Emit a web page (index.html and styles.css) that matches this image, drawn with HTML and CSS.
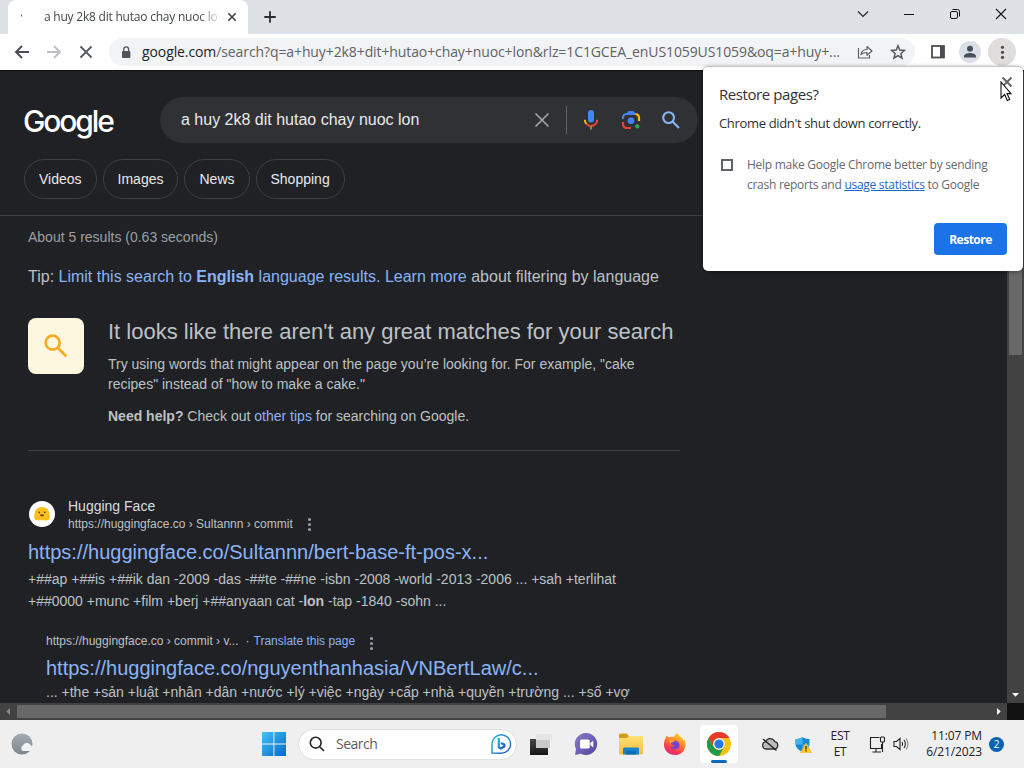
FILE: index.html
```
<!DOCTYPE html>
<html lang="en">
<head>
<meta charset="utf-8">
<title>a huy 2k8 dit hutao chay nuoc lon</title>
<link rel="stylesheet" href="styles.css">
</head>
<body>
<div class="screen">
  <header class="tabstrip">
    <div class="tab">
      <svg class="spinner" width="16" height="16" viewBox="0 0 16 16"><path d="M5.5 5.5v2" stroke="#4a6a85" stroke-width="1.2"/></svg>
      <span class="tab-title">a huy 2k8 dit hutao chay nuoc lo</span>
      <svg class="tab-close" width="10" height="10" viewBox="0 0 10 10"><path d="M1.300 1.300l7.400 7.400M8.700 1.300L1.300 8.700" stroke="#3c4043" stroke-width="1.500"/></svg>
    </div>
    <svg class="newtab" width="14" height="14" viewBox="0 0 14 14"><path d="M7 1.300v11.400M1.300 7h11.400" stroke="#2b2d30" stroke-width="1.800"/></svg>
    <div class="window-buttons">
      <svg width="46" height="28" viewBox="0 0 46 28"><path d="M18 11.500l5 5 5-5" fill="none" stroke="#222" stroke-width="1.100"/></svg>
      <svg width="46" height="28" viewBox="0 0 46 28"><path d="M18 14.500h10" stroke="#111" stroke-width="1"/></svg>
      <svg width="46" height="28" viewBox="0 0 46 28"><g fill="none" stroke="#111"><rect x="18.500" y="11.500" width="7" height="7" rx="1.500"/><path d="M20.500 9.500h5a2 2 0 0 1 2 2v5"/></g></svg>
      <svg width="46" height="28" viewBox="0 0 46 28"><path d="M18 9l10 10M28 9L18 19" stroke="#111" stroke-width="1.100"/></svg>
    </div>
  </header>
  <nav class="toolbar">
    <svg width="16" height="16" viewBox="0 0 16 16"><path d="M15 8H2M8 2L2 8l6 6" fill="none" stroke="#4a4d51" stroke-width="1.900"/></svg>
    <svg width="16" height="16" viewBox="0 0 16 16"><path d="M1 8h13M8 2l6 6-6 6" fill="none" stroke="#bdbfc2" stroke-width="1.900"/></svg>
    <svg width="16" height="16" viewBox="0 0 16 16"><path d="M2.500 2.500l11 11M13.500 2.500l-11 11" stroke="#55585c" stroke-width="1.800"/></svg>
    <div class="omnibox">
      <svg width="10" height="13" viewBox="0 0 10 13"><rect x="1" y="5" width="8.400" height="7" rx="1" fill="#505357"/><path d="M2.800 5V3.300a2.400 2.400 0 0 1 4.800 0V5" fill="none" stroke="#505357" stroke-width="1.300"/></svg>
      <span class="url"><b>google.com</b>/search?q=a+huy+2k8+dit+hutao+chay+nuoc+lon&amp;rlz=1C1GCEA_enUS1059US1059&amp;oq=a+huy+...</span>
      <svg class="share" width="17" height="16" viewBox="0 0 17 16"><g fill="none" stroke="#606367" stroke-width="1.200"><path d="M1.500 4v10h11v-3"/><path d="M4 10.500c.5-3.500 2.500-5 6-5V2.500L15 7l-5 4.300V8.500c-3 0-4.500.5-6 2z" stroke-linejoin="round"/></g></svg>
      <svg class="star" width="16" height="16" viewBox="0 0 16 16"><path d="M8 1.700l1.800 4.300 4.700.4-3.600 3.100 1.100 4.600L8 11.600l-4 2.500 1.100-4.600L1.500 6.400l4.700-.4z" fill="none" stroke="#55585c" stroke-width="1.500"/></svg>
    </div>
    <svg class="side" width="14" height="14" viewBox="0 0 14 14"><rect x="1" y="1" width="12" height="11.500" fill="none" stroke="#4a4d51" stroke-width="1.800"/><path d="M9 1h4v11.500H9z" fill="#4a4d51"/></svg>
    <svg class="avatar" width="22" height="22" viewBox="0 0 22 22"><circle cx="11" cy="11" r="11" fill="#dadfe7"/><circle cx="11" cy="7.800" r="3" fill="#46505f"/><path d="M5 16.500v-1.200c0-2.200 3.500-3.300 6-3.300s6 1.100 6 3.300v1.200z" fill="#46505f"/></svg>
    <svg class="menu" width="28" height="28" viewBox="0 0 28 28"><circle cx="14" cy="14" r="14" fill="#dfdedd"/><g fill="#4a4d51"><circle cx="14.500" cy="9.300" r="1.600"/><circle cx="14.500" cy="14.300" r="1.600"/><circle cx="14.500" cy="19.300" r="1.600"/></g></svg>
  </nav>

  <div class="viewport">
    <main class="page">
      <div class="search-row">
        <div class="logo">Google</div>
        <div class="search-box">
          <span class="query">a huy 2k8 dit hutao chay nuoc lon</span>
          <svg width="16" height="16" viewBox="0 0 16 16"><path d="M1.500 1.500l13 13M14.500 1.500l-13 13" stroke="#a2a5a9" stroke-width="1.700"/></svg>
          <i class="divider"></i>
          <svg class="mic" width="16" height="22" viewBox="0 0 16 22"><rect x="5" y="1" width="6" height="12.500" rx="3" fill="#4285f4"/><g fill="none" stroke-width="2"><path d="M1.800 10.800a6.200 6.200 0 0 0 1.700 4.300" stroke="#fbbc04"/><path d="M3.500 15a6.200 6.200 0 0 0 10.700-4.200" stroke="#ea4335"/><path d="M8 17v3.500" stroke="#8d8b46"/></g></svg>
          <svg class="lens" width="20" height="20" viewBox="0 0 20 20"><circle cx="10" cy="10.800" r="3.300" fill="#4285f4"/><circle cx="16.300" cy="16.300" r="2.100" fill="#34a853"/><g fill="none" stroke-width="2.200"><path d="M10 18H5.500A3.500 3.500 0 0 1 2 14.500V12" stroke="#ea4335"/><path d="M2 9V7.500A3.500 3.500 0 0 1 5.500 4h9" stroke="#4285f4"/><path d="M7 3.500L8 2.200h4l1 1.300" stroke="#4285f4"/><path d="M14.300 4A3.700 3.700 0 0 1 18 7.700V11" stroke="#fbbc04"/></g></svg>
          <svg class="find" width="20" height="20" viewBox="0 0 20 20"><g fill="none" stroke="#8ab4f8" stroke-width="2.100"><circle cx="7.600" cy="7.600" r="5.400"/><path d="M11.600 11.600l6.300 6.300"/></g></svg>
        </div>
      </div>
      <div class="chips"><span>Videos</span><span>Images</span><span>News</span><span>Shopping</span></div>
      <div class="results">
        <p class="stats">About 5 results (0.63 seconds)</p>
        <p class="tip">Tip: <a>Limit this search to <b>English</b> language results.</a> <a>Learn more</a> about filtering by language</p>
        <section class="notice">
          <div class="notice-icon"><svg width="24" height="24" viewBox="0 0 24 24"><g fill="none" stroke="#f9ab24" stroke-width="2.700"><circle cx="8.700" cy="8.700" r="7"/><path d="M13.500 13.500l8.700 8.700"/></g></svg></div>
          <div class="notice-body">
            <h2>It looks like there aren't any great matches for your search</h2>
            <p>Try using words that might appear on the page you’re looking for. For example, "cake<br>recipes" instead of "how to make a cake."</p>
            <p class="help"><b>Need help?</b> Check out <a>other tips</a> for searching on Google.</p>
          </div>
        </section>
        <article class="result">
          <div class="source">
            <svg width="28" height="28" viewBox="0 0 28 28"><circle cx="14" cy="14" r="13" fill="#fff"/><path d="M6.500 18.500C5.500 12 8 7 14 7s8.500 5 7.500 11.500c-.3 2-3 2-4.500 1.800-2-.2-4-.2-6 0-1.500.2-4.200.2-4.500-1.800z" fill="#fcc21b"/><path d="M6.500 17l4 3M21.500 17l-4 3" stroke="#f5ae22"/><circle cx="11.300" cy="12.300" r=".9" fill="#4b3b2b"/><circle cx="16.700" cy="12.300" r=".9" fill="#4b3b2b"/><path d="M12 14.500h4a2 2 0 0 1-4 0z" fill="#6d3427"/></svg>
            <div><div class="site">Hugging Face</div><div class="crumb">https://huggingface.co › Sultannn › commit <i class="dots"></i></div></div>
          </div>
          <h3>https://huggingface.co/Sultannn/bert-base-ft-pos-x...</h3>
          <p>+##ap +##is +##ik dan -2009 -das -##te -##ne -isbn -2008 -world -2013 -2006 ... +sah +terlihat<br>+##0000 +munc +film +berj +##anyaan cat -<b>lon</b> -tap -1840 -sohn ...</p>
        </article>
        <article class="result nested">
          <div class="crumb">https://huggingface.co › commit › v... <span class="mid">·</span> <a>Translate this page</a> <i class="dots"></i></div>
          <h3>https://huggingface.co/nguyenthanhasia/VNBertLaw/c...</h3>
          <p>... +the +sản +luật +nhân +dân +nước +lý +việc +ngày +cấp +nhà +quyền +trường ... +số +vợ</p>
        </article>
      </div>
    </main>
    <div class="vbar"><i class="vthumb"></i><svg width="17" height="17" viewBox="0 0 17 17"><path d="M5 7h7l-3.500 3.700z" fill="#fff"/></svg></div>
    <div class="hbar"><svg width="17" height="17" viewBox="0 0 17 17"><path d="M10 5v7L6.300 8.500z" fill="#8a8a8a"/></svg><i class="hthumb"></i><svg class="right" width="17" height="17" viewBox="0 0 17 17"><path d="M7 5v7l3.700-3.500z" fill="#fff"/></svg></div>
    <div class="corner"></div>
  </div>

  <footer class="taskbar">
    <svg class="weather" width="24" height="24" viewBox="0 0 24 24"><defs><linearGradient id="moon" x2="0" y2="1"><stop stop-color="#a3acb2"/><stop offset="1" stop-color="#7c868c"/></linearGradient></defs><circle cx="11" cy="12" r="10.500" fill="url(#moon)"/><path d="M12 19a3 3 0 0 1 0-5.500 4 4 0 0 1 7-1 3.500 3.500 0 0 1 0 6.500z" fill="#f2f5f7"/></svg>
    <svg class="start" width="24" height="24" viewBox="0 0 24 24"><defs><linearGradient id="win" x2="1" y2="1"><stop stop-color="#42c3f5"/><stop offset="1" stop-color="#0567c9"/></linearGradient></defs><path d="M0 0h11.400v11.400H0zM12.400 0H24v11.400H12.400zM0 12.400h11.400V24H0zM12.400 12.400H24V24H12.400z" fill="url(#win)"/></svg>
    <div class="task-search">
      <svg width="16" height="16" viewBox="0 0 16 16"><g fill="none" stroke="#222" stroke-width="1.600"><circle cx="6.700" cy="6.700" r="5.400"/><path d="M10.700 10.700l4.300 4.300"/></g></svg>
      <span>Search</span>
      <svg class="bing" width="22" height="22" viewBox="0 0 22 22"><defs><linearGradient id="bing" x2="1" y2="1"><stop stop-color="#27b5d8"/><stop offset="1" stop-color="#2755b9"/></linearGradient></defs><path d="M2 20V11a9.300 9.300 0 1 1 9.300 9.300z" fill="#f5fbff" stroke="url(#bing)" stroke-width="1.400"/><path d="M8.800 5v9.300l2 1.200 3.500-2v-2L10.900 10" fill="none" stroke="url(#bing)" stroke-width="2.200"/></svg>
    </div>
    <svg class="taskview" width="24" height="24" viewBox="0 0 24 24"><defs><linearGradient id="tv" x2="0" y2="1"><stop stop-color="#484848"/><stop offset="1" stop-color="#161616"/></linearGradient></defs><path d="M1 7h18v16H1z" fill="url(#tv)"/><path d="M7 3h14v13H7z" fill="#c9c9c9"/><path d="M7 2h16v6H7z" fill="#e5e5e5"/></svg>
    <svg class="chat" width="24" height="24" viewBox="0 0 24 24"><defs><linearGradient id="ch" x2="1" y2="1"><stop stop-color="#8a7ac7"/><stop offset="1" stop-color="#5148a0"/></linearGradient></defs><path d="M12.300 1A11 11 0 1 1 7 21.700L1 23l1-6A11 11 0 0 1 12.300 1z" fill="url(#ch)"/><rect x="6" y="7.500" width="9.700" height="9" rx="1.500" fill="#fff"/><path d="M16.300 11l3-2.500v7l-3-2.500z" fill="#fff"/></svg>
    <svg class="folder" width="26" height="24" viewBox="0 0 26 24"><defs><linearGradient id="fd" x2="0" y2="1"><stop stop-color="#ffe078"/><stop offset="1" stop-color="#f5bd3a"/></linearGradient></defs><path d="M1 3a1.500 1.500 0 0 1 1.500-1.500h6L11 4h13v5H1z" fill="#d39a1c"/><path d="M1 6h8l2-2h12.500A1.500 1.500 0 0 1 25 5.500V21a1.500 1.500 0 0 1-1.500 1.500h-21A1.500 1.500 0 0 1 1 21z" fill="url(#fd)"/><path d="M5 22.500V17a1.500 1.500 0 0 1 1.500-1.500h13A1.500 1.500 0 0 1 21 17v5.500z" fill="#1683cf"/><path d="M8 19h10v3.500H8z" fill="#106cb5"/></svg>
    <svg class="firefox" width="24" height="24" viewBox="0 0 24 24"><defs><linearGradient id="ff" x1=".8" y1="0" x2=".3" y2="1"><stop stop-color="#ffdd3c"/><stop offset=".4" stop-color="#ff8a26"/><stop offset=".75" stop-color="#f83c50"/><stop offset="1" stop-color="#dc2a87"/></linearGradient></defs><path d="M3.500 3.500c1 1 1.700 1.400 2.500 1.800C8 4.500 10 5 11.500 4.500 11.500 2.500 13 1.500 14.500 1c.5 3 5.500 4 6 8l1-1.500C24 13 22 23 12.300 23 4 23 .5 17 1 11.500 1.200 8 2.500 7 3.500 3.500z" fill="url(#ff)"/><path d="M8 9c2 .2 3-.7 4.500-.2 3 .7 5 3 3.800 6-1.800 4-8 3.300-8.800-.8 1.500 1.300 3.200 1 4.200-.4-1.700-.3-3-.7-3.800-2z" fill="#7745c9"/><path d="M6 6.500c1.700 1.300 3 1.200 5.700 2.300-1 1.700-2.500 1.200-4 2.600C6.300 10.500 5.700 9 6 6.500z" fill="#ff9f34"/></svg>
    <div class="task-active">
      <svg width="24" height="24" viewBox="0 0 24 24"><circle cx="12" cy="12" r="12" fill="#fbc116"/><path d="M1.600 6A12 12 0 0 1 22.400 6H12a6 6 0 0 0-5.200 9z" fill="#e33b2e"/><path d="M1.600 6A12 12 0 0 0 12 24l5.200-9A6 6 0 0 1 6.800 15z" fill="#229a4b"/><circle cx="12" cy="12" r="5.800" fill="#fff"/><circle cx="12" cy="12" r="4.600" fill="#2879e5"/></svg>
      <i></i>
    </div>
    <svg class="cloud" width="18" height="16" viewBox="0 0 18 16"><path d="M5 13a3.700 3.700 0 0 1-.5-7.300 5 5 0 0 1 9.300 0A3.700 3.700 0 0 1 13.500 13z" fill="#bdbdbd" stroke="#333" stroke-width="1.300"/><path d="M2 3l13.500 11.500" stroke="#222" stroke-width="1.400"/></svg>
    <svg class="shield" width="17" height="17" viewBox="0 0 17 17"><path d="M7.500 1c2 1.500 4 2 7 2v4.500c0 4-3 6.500-7 8.500-4-2-7-4.500-7-8.500V3c3 0 5-.5 7-2z" fill="#168ad8"/><path d="M7.500 1v7.500h-7V3c3 0 5-.5 7-2zM7.500 8.500h7c-.5 4-3.500 6-7 7.500z" fill="#43b5ed"/><path d="M11 7l5.500 9.500h-11z" fill="#ffc928" stroke="#f5a910" stroke-width=".5"/><path d="M11 10v3.500M11 14.300v1.200" stroke="#332500" stroke-width="1.300"/></svg>
    <div class="lang">EST<br>ET</div>
    <svg class="network" width="17" height="17" viewBox="0 0 17 17"><g fill="none" stroke="#222" stroke-width="1.100"><path d="M10.500 1.500h-9v11h11V8M7 12.500V16M3.500 16H12"/><rect x="11.500" y="1" width="4" height="5" rx="1"/><path d="M13.500 6v10"/></g></svg>
    <svg class="sound" width="17" height="16" viewBox="0 0 17 16"><g fill="none" stroke="#222" stroke-width="1.100"><path d="M1 5.500v5h2.500L7 13.500v-11L3.500 5.500z"/><path d="M9 6c.8 1.300.8 2.700 0 4M11 4c1.700 2.500 1.700 5.500 0 8"/><path d="M13 2.500c2.500 3.500 2.500 7.500 0 11" stroke="#888"/></g></svg>
    <div class="clock">11:07 PM<br>6/21/2023</div>
    <div class="badge">2</div>
  </footer>

  <aside class="restore">
    <svg class="restore-close" width="12" height="12" viewBox="0 0 12 12"><path d="M1.500 1.500l9 9M10.500 1.500l-9 9" stroke="#5f6368" stroke-width="1.900"/></svg>
    <h4>Restore pages?</h4>
    <p class="message">Chrome didn't shut down correctly.</p>
    <div class="consent"><i class="checkbox"></i><p>Help make Google Chrome better by sending<br>crash reports and <a>usage statistics</a> to Google</p></div>
    <button>Restore</button>
  </aside>
  <svg class="cursor" width="13" height="21" viewBox="0 0 13 21"><path d="M1 1v16l3.700-3.500 2.600 6 2.400-1-2.600-5.900H11z" fill="#fff" stroke="#111" stroke-width="1.100"/></svg>
</div>
</body>
</html>
```
FILE: styles.css
```
* { box-sizing: border-box; }
body { margin: 0; font-family: "Liberation Sans", Arial, sans-serif; }
h2, h3, h4, p { margin: 0; font-weight: 400; }
svg { display: block; flex: none; }
i { font-style: normal; }
.screen { position: relative; width: 1024px; height: 768px; overflow: hidden; display: flex; flex-direction: column; }
.tabstrip, .toolbar, .taskbar, .restore { font-family: "Open Sans", "Noto Sans", sans-serif; }

.tabstrip { height: 34px; background: #dee1e6; display: flex; flex: none; }
.tab { width: 240px; margin-left: 8px; background: #fff; border-radius: 8px 8px 0 0; display: flex; align-items: center; padding-left: 8px; }
.tab-title { width: 174px; margin-left: 12px; font-size: 12px; line-height: 17px; margin-top: -1px; letter-spacing: -.22px; color: #45484c; white-space: nowrap; mask-image: linear-gradient(90deg, #000 155px, transparent 178px); }
.tab-close { margin-left: 9px; }
.newtab { margin: 10px 0 0 15px; }
.window-buttons { margin-left: auto; display: flex; }

.toolbar { height: 37px; background: #fff; display: flex; flex: none; align-items: center; padding-left: 14px; border-bottom: 1px solid #111; }
.toolbar > svg + svg { margin-left: 16px; }
.omnibox { margin-left: 15px; width: 806px; height: 28px; background: #f1f3f4; border-radius: 14px; display: flex; align-items: center; padding-left: 12px; }
.url { margin: -2px 0 0 11px; width: 701px; font-size: 14px; letter-spacing: -.1px; color: #606367; white-space: nowrap; }
.url b { font-weight: 400; color: #222; }
.share { margin-left: 14px; }
.star { margin-left: 16px; }
.side { margin-left: 16px; }
.toolbar > .avatar { margin-left: 14px; }
.toolbar > .menu { margin-left: 7px; }

.viewport { height: 649px; display: grid; grid-template: 632px 17px / 1007px 17px; flex: none; }
.page { background: #202124; overflow: hidden; color: #bdc1c6; }
.page a { color: #8ab4f8; }
.search-row { display: flex; padding: 26px 0 0 24px; height: 72px; }
.logo { width: 136px; margin-left: -1px; padding-top: 2px; font: 500 30px/44px Inter, sans-serif; letter-spacing: -2.1px; color: #fff; }
.search-box { width: 538px; height: 46px; margin-left: 1px; border-radius: 23px; background: #303134; display: flex; align-items: center; padding-left: 21px; color: #e8eaed; font-size: 16px; }
.query { width: 353px; line-height: 20px; }
.divider { width: 1px; height: 28px; margin-left: 16px; background: #5f6368; }
.mic { margin-left: 16px; }
.lens { margin-left: 22px; }
.find { margin-left: 20px; }
.chips { display: flex; gap: 6px; height: 73px; padding: 16px 0 0 24px; border-bottom: 1px solid #3c4043; }
.chips span { height: 40px; line-height: 38px; border: 1px solid #3c4043; border-radius: 20px; padding: 0 14px; font-size: 14px; color: #e8eaed; }
.results { padding-left: 28px; }
.stats { padding-top: 11px; font-size: 14px; line-height: 20px; color: #9aa0a6; }
.tip { margin-top: 19px; font-size: 16px; line-height: 22px; }
.notice { display: flex; gap: 24px; width: 652px; height: 163px; padding-top: 30px; border-bottom: 1px solid #3c4043; }
.notice-icon { width: 56px; height: 56px; border-radius: 8px; background: #fef7e0; display: flex; align-items: center; justify-content: center; }
.notice h2 { font-size: 22px; line-height: 28px; white-space: nowrap; }
.notice p { font-size: 14px; line-height: 20px; margin-top: 8px; }
.notice p.help { margin-top: 12px; }
.result { margin-top: 45px; white-space: nowrap; }
.source { display: flex; gap: 12px; height: 37px; align-items: center; }
.source > svg { margin-top: -1px; }
.site { margin-top: -1px; font-size: 14px; line-height: 20px; color: #dadce0; }
.crumb { display: flex; align-items: center; font-size: 12px; line-height: 17px; color: #bdc1c6; }
.dots { width: 3px; height: 3px; border-radius: 50%; background: #9aa0a6; box-shadow: 0 -5px #9aa0a6, 0 5px #9aa0a6; margin-left: 15px; }
.result h3 { font-size: 20px; line-height: 26px; margin-top: 6px; color: #8ab4f8; }
.result p { font-size: 14px; line-height: 22px; margin-top: 3px; }
.result.nested { margin: 21px 0 0 18px; }
.result.nested h3 { margin-top: 5px; }
.result.nested p { margin-top: 0; }
.nested .dots { margin-top: 3px; }
.mid { margin: 0 4px 0 7px; }
.vbar { background: #424242; display: flex; flex-direction: column; justify-content: flex-end; }
.vthumb { width: 13px; height: 190px; margin: 0 2px 331px; background: #686868; }
.hbar { background: #424242; display: flex; }
.hthumb { width: 869px; height: 13px; margin-top: 2px; background: #686868; }
.right { margin-left: auto; }
.corner { background: #121212; }

.taskbar { height: 48px; background: #efefef; display: flex; align-items: center; flex: none; color: #222; }
.weather { margin-left: 11px; }
.start { margin-left: 227px; }
.task-search { margin-left: 12px; width: 219px; height: 31px; background: #fff; border: 1px solid #e0e0e0; border-radius: 16px; display: flex; flex: none; align-items: center; padding-left: 10px; font-size: 14px; color: #5d5d5d; }
.task-search span { width: 156px; margin: -1px 0 0 11px; letter-spacing: -.5px; }
.bing { margin-left: -2px; }
.taskview { margin-left: 12px; }
.chat { margin-left: 21px; }
.folder { margin-left: 20px; }
.firefox { margin-left: 19px; }
.task-active { width: 38px; height: 38px; margin-left: 13px; background: #fff; border-radius: 4px; display: flex; flex-direction: column; align-items: center; padding-top: 7px; flex: none; }
.task-active i { width: 16px; height: 3px; border-radius: 2px; background: #0c69b5; margin-top: 4px; }
.cloud { margin-left: 23px; }
.shield { margin-left: 16px; }
.lang { width: 40px; margin-left: 8px; text-align: center; font-size: 12px; line-height: 16px; letter-spacing: -.3px; }
.network { margin-left: 9px; }
.sound { margin-left: 7px; }
.clock { width: 72px; text-align: right; font-size: 12px; line-height: 16px; letter-spacing: -.12px; white-space: nowrap; }
.badge { width: 15px; height: 15px; margin-left: 7px; border-radius: 50%; background: #0863b5; color: #fff; font-size: 10px; line-height: 15px; text-align: center; }

.restore { position: absolute; left: 703px; top: 66px; width: 320px; height: 205px; background: #fff; border-radius: 5px; border-top: 1px solid #c4c4c4; padding: 16px 16px; color: #303236; box-shadow: 0 1px 4px #0006; }
.restore-close { position: absolute; right: 10px; top: 9px; }
.restore h4 { font-size: 15px; line-height: 22px; letter-spacing: -.42px; }
.restore .message { margin-top: 8px; font-size: 13px; line-height: 20px; letter-spacing: -.34px; }
.consent { display: flex; margin-top: 21px; font-size: 12px; line-height: 20px; letter-spacing: -.27px; color: #66696d; white-space: nowrap; }
.consent p { margin-top: 1px; }
.checkbox { width: 12px; height: 12px; border: 2px solid #606367; margin: 5px 14px 0 2px; }
.consent a { color: #1a67c7; text-decoration: underline; }
.restore button { display: block; width: 73px; height: 32px; margin: 28px 0 0 auto; padding: 0; border: 0; border-radius: 4px; background: #1a73e8; color: #fff; font: 700 12px "Open Sans", sans-serif; letter-spacing: -.5px; }
.cursor { position: absolute; left: 1000px; top: 81px; }
```
